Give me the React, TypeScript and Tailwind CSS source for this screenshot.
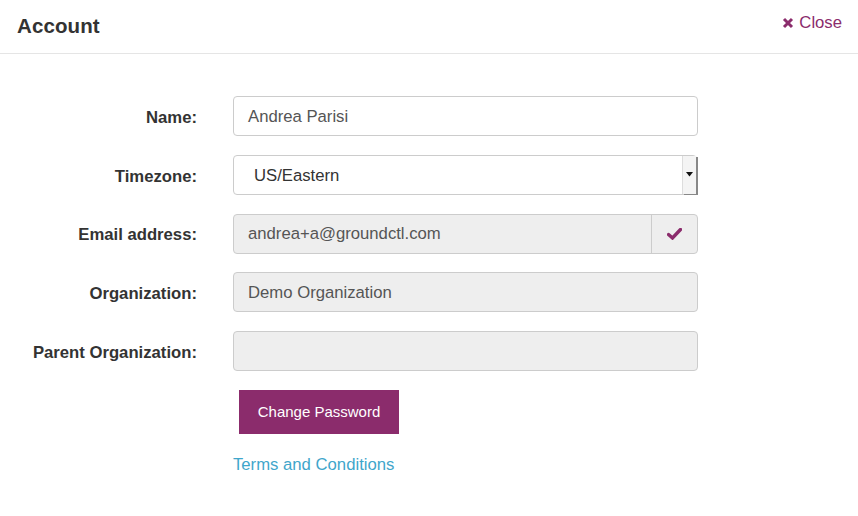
import React from "react";

const font = { fontFamily: '"Liberation Sans", Arial, sans-serif' };

function Row({ label, children }: { label: string; children: React.ReactNode }) {
  return (
    <div className="flex h-[40px] items-center">
      <label className="w-[197px] pt-[3px] text-right text-[16.7px] font-bold text-[#333]">{label}</label>
      <div className="ml-[36px] w-[465px]">{children}</div>
    </div>
  );
}

export default function App() {
  return (
    <div className="h-[516px] w-[858px] bg-white" style={font}>
      <div className="flex h-[54px] items-start justify-between border-b border-[#e5e5e5] pl-[17px] pr-[16px]">
        <h1 className="mt-[11px] text-[20.5px] font-bold tracking-[0.1px] text-[#333]">Account</h1>
        <button type="button" className="mt-[10px] flex items-center gap-[5px] text-[16.7px] text-[#8b2c6c]">
          <svg width="12" height="12" viewBox="0 0 12 12" className="mt-[1px]">
            <path d="M2 2 L10 10 M10 2 L2 10" stroke="#8b2c6c" strokeWidth="3" strokeLinecap="butt" />
          </svg>
          Close
        </button>
      </div>

      <div className="flex flex-col gap-[18.75px] pt-[42px]">
        <Row label="Name:">
          <div className="flex h-[40px] items-center rounded-[4px] border border-[#ccc] bg-white px-[14px] pt-[1px] text-[16.7px] text-[#555]">
            Andrea Parisi
          </div>
        </Row>
        <Row label="Timezone:">
          <div className="flex h-[40px] w-[464px] items-stretch rounded-[4px] border border-[#ccc] bg-white text-[16.7px] text-[#333]">
            <div className="flex flex-1 items-center pl-[20px] pt-[1px]">US/Eastern</div>
            <div className="flex w-[14px] items-center justify-center border-l border-[#ddd] bg-[#f4f4f4] shadow-[2px_1px_0_#888]">
              <svg width="7" height="5" viewBox="0 0 7 5">
                <path d="M0 0 H7 L3.5 4.5 Z" fill="#111" />
              </svg>
            </div>
          </div>
        </Row>
        <Row label="Email address:">
          <div className="flex h-[40px] items-stretch rounded-[4px] border border-[#ccc] bg-[#eee] text-[16.7px] text-[#555]">
            <div className="flex flex-1 items-center px-[14px] pt-[1px]">andrea+a@groundctl.com</div>
            <div className="flex w-[46px] items-center justify-center border-l border-[#ccc]">
              <svg width="15" height="12" viewBox="0 0 15 12">
                <path d="M1.5 6.5 L5.5 10 L13.5 1.5" stroke="#8b2c6c" strokeWidth="3.4" fill="none" strokeLinecap="round" />
              </svg>
            </div>
          </div>
        </Row>
        <Row label="Organization:">
          <div className="flex h-[40px] items-center rounded-[4px] border border-[#ccc] bg-[#eee] px-[14px] pt-[1px] text-[16.7px] text-[#555]">
            Demo Organization
          </div>
        </Row>
        <Row label="Parent Organization:">
          <div className="h-[40px] rounded-[4px] border border-[#ccc] bg-[#eee]" />
        </Row>
      </div>

      <div className="ml-[233px] mt-[19px] flex flex-col items-start">
        <button
          type="button"
          className="ml-[6px] flex h-[44px] w-[160px] items-center justify-center bg-[#8b2c6c] text-[15px] text-white"
        >
          Change Password
        </button>
        <a href="#" className="mt-[18px] text-[16.7px] text-[#3fa6cb]">
          Terms and Conditions
        </a>
      </div>
    </div>
  );
}
